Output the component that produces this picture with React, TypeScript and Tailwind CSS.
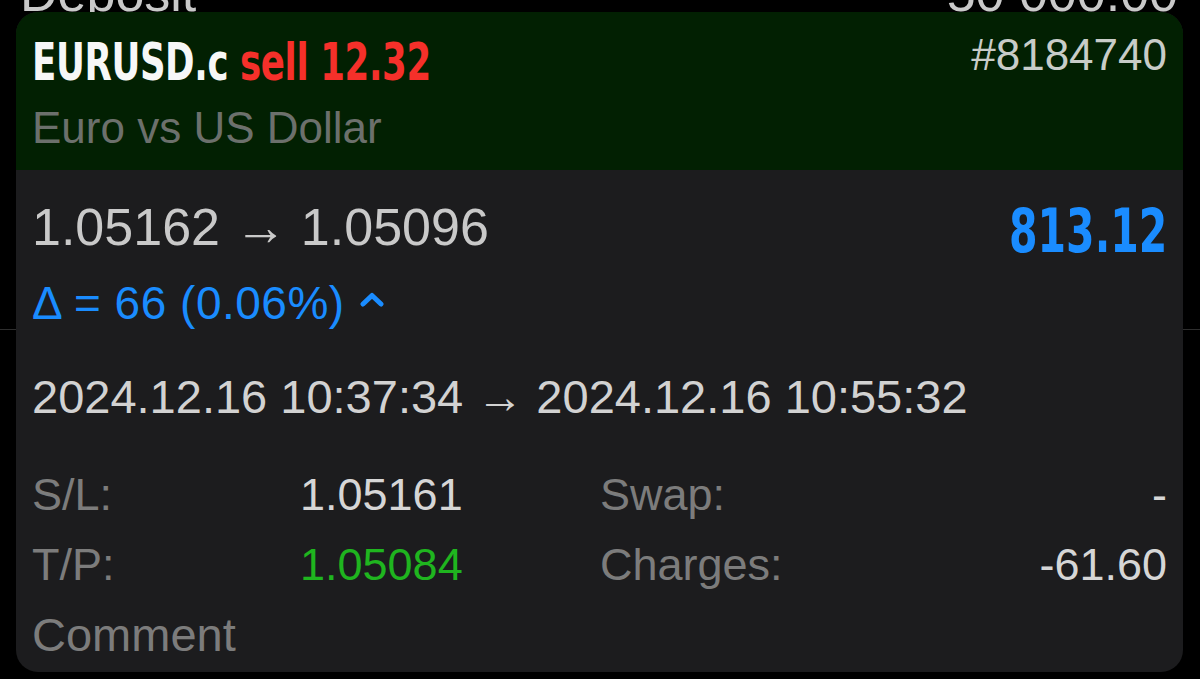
const sans = "font-['Liberation_Sans','Helvetica_Neue',Arial,sans-serif]";
const narrow = "font-['DejaVu_Sans_Condensed','Liberation_Sans',sans-serif]";

function ChevronUp() {
  return (
    <svg width="24" height="16" viewBox="0 0 24 16" className="ml-[15px] mt-[10px]" fill="none">
      <path d="M3 13 L12 4.5 L21 13" stroke="#1a8cff" strokeWidth="5" strokeLinecap="round" strokeLinejoin="round" />
    </svg>
  );
}

const rows = [
  { label: "S/L:", value: "1.05161", valueClass: "text-[#d6d6d6]", label2: "Swap:", value2: "-" },
  { label: "T/P:", value: "1.05084", valueClass: "text-[#1fb51f]", label2: "Charges:", value2: "-61.60" },
];

export default function App() {
  return (
    <div
      className={`${sans} h-[679px] w-[1200px] overflow-hidden bg-black bg-[linear-gradient(to_bottom,#000_329px,#2e2e2e_329px,#2e2e2e_330px,#000_330px)]`}
    >
      {/* list behind the sheet, only its last line shows */}
      <div className="flex h-[12px] items-end justify-between overflow-hidden pl-[20px] pr-[22px]">
        <span className="-mb-[7px] text-[52px] leading-none text-[#c9c9c9]">Deposit</span>
        <span className="-mb-[7px] text-[52px] leading-none text-[#c9c9c9]">50 000.00</span>
      </div>

      <div className="ml-[16px] w-[1167px] overflow-hidden rounded-[22px] bg-[#1c1c1e]">
        <div className="bg-[#022002] px-[16px] pb-[24px] pt-[22px]">
          <div className="flex items-start justify-between">
            <div
              className={`${narrow} inline-block origin-left scale-x-[0.76] whitespace-nowrap text-[52px] font-bold leading-[56px] tracking-[-0.5px]`}
            >
              <span className="text-[#f7f7f7]">EURUSD.c</span>{" "}
              <span className="text-[#f5302a]">sell 12.32</span>
            </div>
            <div className="text-[44px] leading-[42px] text-[#c8ccc8]">#8184740</div>
          </div>
          <div className="mt-[20px] text-[44px] leading-[36px] text-[#6c706c]">Euro vs US Dollar</div>
        </div>

        <div className="px-[16px] pb-[2px] pt-[27px]">
          <div className="flex items-start justify-between">
            <div className="text-[52px] leading-[60px] text-[#c9c9c9]">1.05162 → 1.05096</div>
            <div
              className={`${narrow} inline-block origin-right scale-x-[0.76] text-[60px] font-bold leading-[68px] text-[#1a8cff]`}
            >
              813.12
            </div>
          </div>
          <div className="mt-[16px] flex items-start text-[46px] leading-[44px] tracking-[0.5px] text-[#1a8cff]">
            <span>Δ = 66 (0.06%)</span>
            <ChevronUp />
          </div>

          <div className="mt-[48px] text-[47px] leading-[48px] text-[#d2d2d2]">
            2024.12.16 10:37:34 → 2024.12.16 10:55:32
          </div>

          <div className="mt-[39px] grid grid-cols-[268px_300px_1fr_auto] text-[45px] leading-[70px]">
            {rows.map((r) => (
              <div key={r.label} className="contents">
                <div className="text-[#7c7c7c]">{r.label}</div>
                <div className={r.valueClass}>{r.value}</div>
                <div className="text-[#7c7c7c]">{r.label2}</div>
                <div className="text-right text-[#d6d6d6]">{r.value2}</div>
              </div>
            ))}
            <div className="col-span-4 text-[47px] text-[#7c7c7c]">Comment</div>
          </div>
        </div>
      </div>
    </div>
  );
}
